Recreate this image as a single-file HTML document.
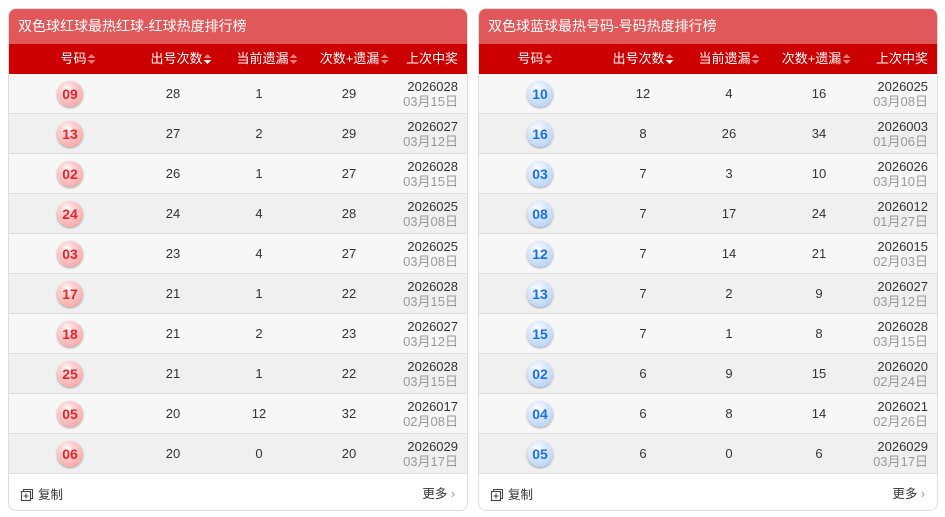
<!DOCTYPE html>
<html><head><meta charset="utf-8"><style>
*{margin:0;padding:0;box-sizing:border-box}
body{width:945px;height:517px;background:#fff;font-family:"Liberation Sans","Noto Sans CJK SC",sans-serif;position:relative;overflow:hidden}
.p{position:absolute;top:8px;width:460px;height:503px;border:1px solid #ddd;border-radius:8px;overflow:hidden;background:#fff}
.t{height:35px;background:#e0585a;color:#fff;font-size:14px;line-height:35px;padding-left:9px}
.h{height:30px;background:#cc0000;color:#fff;font-size:13px;position:relative}
.h span,.r span{position:absolute;top:0;transform:translateX(-50%);white-space:nowrap}
.h span{line-height:30px}
.ar{display:inline-block;width:8px;height:10px;vertical-align:-1px;margin-left:1px;position:relative}
.ar:before{content:"";position:absolute;left:0;top:0;border:4px solid transparent;border-top:0;border-bottom:4px solid #e98080}
.ar:after{content:"";position:absolute;left:0;top:6px;border:4px solid transparent;border-bottom:0;border-top:4px solid #e98080}
.ar.d:after{border-top-color:#fff}
.r{height:40px;position:relative;border-bottom:1px solid #ddd;font-size:13px;color:#333}
.r:nth-child(odd){background:#f7f7f7}.r:nth-child(even){background:#f0f0f0}
.r span{line-height:40px}
.b{position:absolute;left:48px;top:7px;width:26px;height:26px;border-radius:50%;font-weight:bold;font-size:14px;text-align:center;line-height:26px;box-shadow:0 1px 2px rgba(0,0,0,.35)}
.red .b{background:radial-gradient(circle at 40% 30%,#fff 0,#ffd0d0 30%,#f29a9a 100%);color:#e8222a}
.blue .b{background:radial-gradient(circle at 40% 30%,#fff 0,#dbe9ff 35%,#a9c8f2 100%);color:#1a6ee6}
.dt{position:absolute;right:9px;top:5px;text-align:right;line-height:15px;font-size:13px}
.dt i{font-style:normal;color:#999;display:block}
.f{height:36px;position:relative;font-size:12.5px;color:#333}
.f .c{position:absolute;left:11px;top:10px}
.f .m{position:absolute;right:12px;top:9px}
</style></head><body>

<div class="p red" style="left:8px">
<div class="t">双色球红球最热红球-红球热度排行榜</div>
<div class="h"><span style="left:69px">号码<i class="ar"></i></span><span style="left:172px">出号次数<i class="ar d"></i></span><span style="left:258px">当前遗漏<i class="ar"></i></span><span style="left:345px">次数+遗漏<i class="ar"></i></span><span style="left:423px">上次中奖</span></div>
<div>
<div class="r"><div class="b">09</div><span style="left:164px">28</span><span style="left:250px">1</span><span style="left:340px">29</span><div class="dt">2026028<i>03月15日</i></div></div>
<div class="r"><div class="b">13</div><span style="left:164px">27</span><span style="left:250px">2</span><span style="left:340px">29</span><div class="dt">2026027<i>03月12日</i></div></div>
<div class="r"><div class="b">02</div><span style="left:164px">26</span><span style="left:250px">1</span><span style="left:340px">27</span><div class="dt">2026028<i>03月15日</i></div></div>
<div class="r"><div class="b">24</div><span style="left:164px">24</span><span style="left:250px">4</span><span style="left:340px">28</span><div class="dt">2026025<i>03月08日</i></div></div>
<div class="r"><div class="b">03</div><span style="left:164px">23</span><span style="left:250px">4</span><span style="left:340px">27</span><div class="dt">2026025<i>03月08日</i></div></div>
<div class="r"><div class="b">17</div><span style="left:164px">21</span><span style="left:250px">1</span><span style="left:340px">22</span><div class="dt">2026028<i>03月15日</i></div></div>
<div class="r"><div class="b">18</div><span style="left:164px">21</span><span style="left:250px">2</span><span style="left:340px">23</span><div class="dt">2026027<i>03月12日</i></div></div>
<div class="r"><div class="b">25</div><span style="left:164px">21</span><span style="left:250px">1</span><span style="left:340px">22</span><div class="dt">2026028<i>03月15日</i></div></div>
<div class="r"><div class="b">05</div><span style="left:164px">20</span><span style="left:250px">12</span><span style="left:340px">32</span><div class="dt">2026017<i>02月08日</i></div></div>
<div class="r"><div class="b">06</div><span style="left:164px">20</span><span style="left:250px">0</span><span style="left:340px">20</span><div class="dt">2026029<i>03月17日</i></div></div>
</div>
<div class="f"><div class="c"><svg width="14" height="14" viewBox="0 0 14 14" style="vertical-align:-3px;margin-right:4px" fill="none" stroke="#444" stroke-width="1.1"><path d="M3.5 3.5V1.5h9v9h-2"/><rect x="1.5" y="3.5" width="9" height="9"/><path d="M6 5.5v5M3.5 8h5"/></svg>复制</div><div class="m">更多 <span style="color:#999">›</span></div></div>
</div>

<div class="p blue" style="left:478px">
<div class="t">双色球蓝球最热号码-号码热度排行榜</div>
<div class="h"><span style="left:56px">号码<i class="ar"></i></span><span style="left:164px">出号次数<i class="ar d"></i></span><span style="left:250px">当前遗漏<i class="ar"></i></span><span style="left:337px">次数+遗漏<i class="ar"></i></span><span style="left:423px">上次中奖</span></div>
<div>
<div class="r"><div class="b">10</div><span style="left:164px">12</span><span style="left:250px">4</span><span style="left:340px">16</span><div class="dt">2026025<i>03月08日</i></div></div>
<div class="r"><div class="b">16</div><span style="left:164px">8</span><span style="left:250px">26</span><span style="left:340px">34</span><div class="dt">2026003<i>01月06日</i></div></div>
<div class="r"><div class="b">03</div><span style="left:164px">7</span><span style="left:250px">3</span><span style="left:340px">10</span><div class="dt">2026026<i>03月10日</i></div></div>
<div class="r"><div class="b">08</div><span style="left:164px">7</span><span style="left:250px">17</span><span style="left:340px">24</span><div class="dt">2026012<i>01月27日</i></div></div>
<div class="r"><div class="b">12</div><span style="left:164px">7</span><span style="left:250px">14</span><span style="left:340px">21</span><div class="dt">2026015<i>02月03日</i></div></div>
<div class="r"><div class="b">13</div><span style="left:164px">7</span><span style="left:250px">2</span><span style="left:340px">9</span><div class="dt">2026027<i>03月12日</i></div></div>
<div class="r"><div class="b">15</div><span style="left:164px">7</span><span style="left:250px">1</span><span style="left:340px">8</span><div class="dt">2026028<i>03月15日</i></div></div>
<div class="r"><div class="b">02</div><span style="left:164px">6</span><span style="left:250px">9</span><span style="left:340px">15</span><div class="dt">2026020<i>02月24日</i></div></div>
<div class="r"><div class="b">04</div><span style="left:164px">6</span><span style="left:250px">8</span><span style="left:340px">14</span><div class="dt">2026021<i>02月26日</i></div></div>
<div class="r"><div class="b">05</div><span style="left:164px">6</span><span style="left:250px">0</span><span style="left:340px">6</span><div class="dt">2026029<i>03月17日</i></div></div>
</div>
<div class="f"><div class="c"><svg width="14" height="14" viewBox="0 0 14 14" style="vertical-align:-3px;margin-right:4px" fill="none" stroke="#444" stroke-width="1.1"><path d="M3.5 3.5V1.5h9v9h-2"/><rect x="1.5" y="3.5" width="9" height="9"/><path d="M6 5.5v5M3.5 8h5"/></svg>复制</div><div class="m">更多 <span style="color:#999">›</span></div></div>
</div>

</body></html>
